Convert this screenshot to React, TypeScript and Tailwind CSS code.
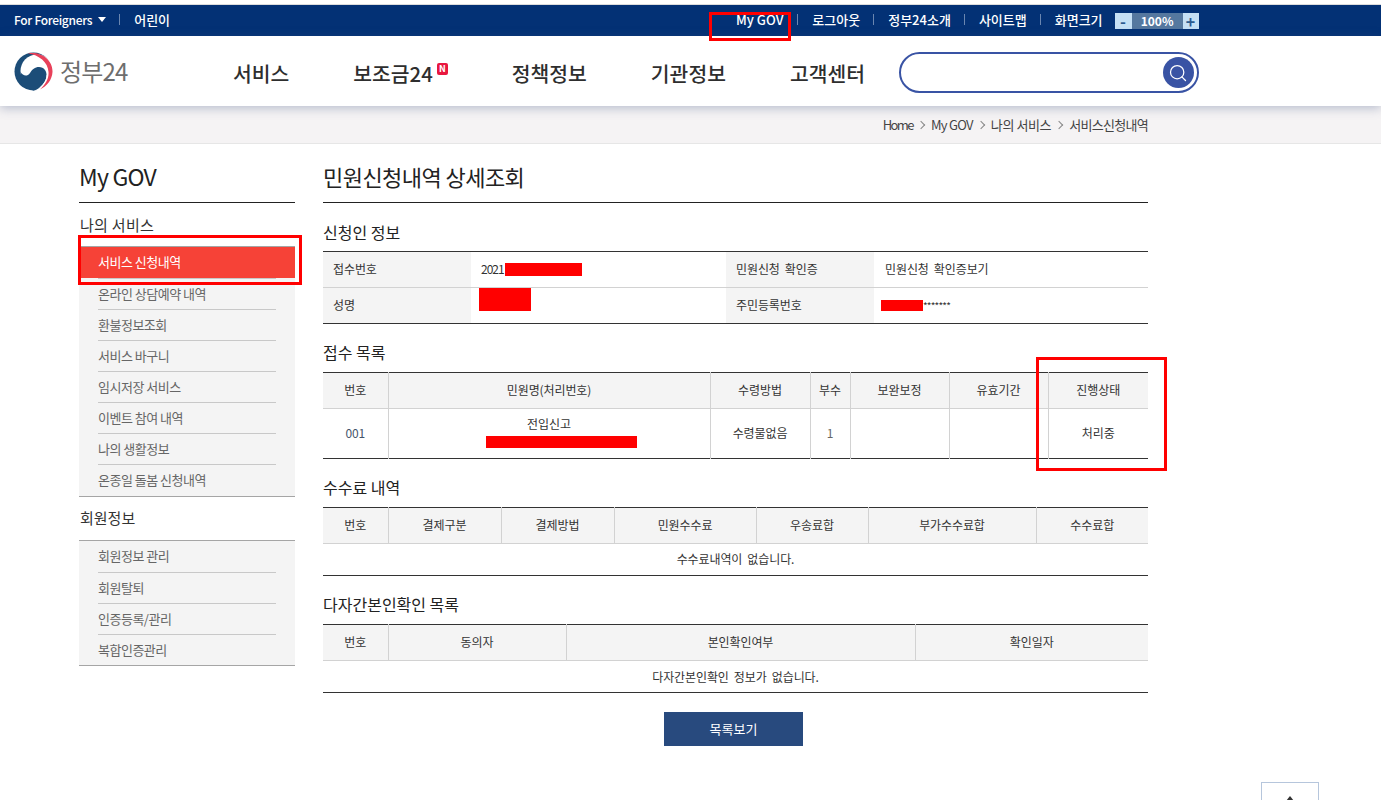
import React from 'react';
import { Search } from 'lucide-react';

const FONT = 'font-["Noto_Sans_CJK_KR","Noto_Sans",sans-serif]';

const TOP_LINKS = ['My GOV', '로그아웃', '정부24소개', '사이트맵'];
const MAIN_MENU = ['서비스', '보조금24', '정책정보', '기관정보', '고객센터'];
const BREADCRUMB = [
  { label: 'Home', className: 'tracking-[-1.6px]' },
  { label: 'My GOV', className: '' },
  { label: '나의 서비스', className: 'tracking-[-0.4px]' },
  { label: '서비스신청내역', className: '' },
];
const SERVICE_MENU = ['온라인 상담예약 내역', '환불정보조회', '서비스 바구니', '임시저장 서비스', '이벤트 참여 내역', '나의 생활정보', '온종일 돌봄 신청내역'];
const MEMBER_MENU = ['회원정보 관리', '회원탈퇴', '인증등록/관리', '복합인증관리'];

const Th: React.FC<{ children: React.ReactNode; last?: boolean }> = ({ children, last }) => (
  <th className={`h-[36px] pb-[2px] bg-[#f4f4f4] border-b border-[#d2d2d2] font-normal ${last ? '' : 'border-r'}`}>{children}</th>
);

const Td: React.FC<{ children?: React.ReactNode; last?: boolean }> = ({ children, last }) => (
  <td className={`pb-[2px] text-center ${last ? '' : 'border-r border-[#d2d2d2]'}`}>{children}</td>
);

const SectionTitle: React.FC<{ children: React.ReactNode }> = ({ children }) => (
  <h3 className="text-[16px] leading-[24px] tracking-normal [word-spacing:0] text-[#222] font-normal">{children}</h3>
);

const App: React.FC = () => {
  return (
    <div className={`relative h-[800px] overflow-hidden bg-white text-[12px] text-[#333] tracking-[-0.1px] ${FONT}`}>
      {/* Top strip */}
      <div className="h-[5px] bg-white border-b border-[#ddd]" />
      <div className="h-[31px] bg-[#033175] flex items-center pl-[14px] pb-[2px] text-white text-[13px] tracking-normal font-medium">
        <span className="text-[12px] tracking-[-0.3px] flex items-center">
          For Foreigners
          <span className="ml-[6px] w-0 h-0 border-x-[4px] border-x-transparent border-t-[5px] border-t-white" />
        </span>
        <span className="ml-[13px] w-px h-[11px] bg-[#6a86b0]" />
        <span className="ml-[14px]">어린이</span>
        <div className="ml-[566px] flex items-center">
          {TOP_LINKS.map(link => (
            <React.Fragment key={link}>
              <span className={link === 'My GOV' ? 'mr-[1px]' : ''}>{link}</span>
              <span className="ml-[13px] mr-[14px] w-px h-[11px] bg-[#6a86b0]" />
            </React.Fragment>
          ))}
          <span>화면크기</span>
          <div className="ml-[12px] mt-[3px] flex items-center h-[16px] font-bold">
            <span className="w-[17px] h-full bg-[#c5e0f5] text-[#2b5a8f] flex items-center justify-center text-[16px]">-</span>
            <span className="w-[51px] h-full bg-[#55789f] flex items-center justify-center text-[12px]">100%</span>
            <span className="w-[16px] h-full bg-[#c5e0f5] text-[#2b5a8f] flex items-center justify-center text-[16px]">+</span>
          </div>
        </div>
      </div>

      {/* Main header */}
      <header className="relative z-10 h-[70px] bg-white flex items-center shadow-[0_2px_10px_rgba(60,80,130,0.35)]">
        <div className="ml-[14px] w-[190px] flex items-center">
          <svg width="39" height="39" viewBox="0 0 39 39" aria-hidden="true">
            <circle cx="19.5" cy="19.5" r="19" fill="#1c4d78" />
            <circle cx="23" cy="19" r="16.5" fill="#fff" />
            <path d="M6.5 20C9 24 13 25 16 21C18 17.5 21 15 25 15C30 15 33 19 32.5 24C32 30 27 36 19.5 38.5L8 34Z" fill="#1c4d78" />
            <path d="M32.6 23C32.5 30 27 36 20.5 38.6L40 40L40 23Z" fill="#fff" />
            <path d="M14 1.5C27 -1 39 8 38.5 20C38 28 33 34 26 37.5C32 32 35 26 34.5 20C34 10 25 3 14 1.5Z" fill="#e8415a" />
          </svg>
          <span className="ml-[7px] text-[24px] font-normal tracking-[-0.8px] text-[#6e6e6e]">정부24</span>
        </div>
        <nav className="ml-[29px] pt-[4px] flex items-center gap-[64px] text-[20.4px] font-medium text-[#2e2e2e] tracking-normal">
          {MAIN_MENU.map(item => (
            <span key={item} className={`relative ${item === '보조금24' ? 'mr-[15px]' : ''}`}>
              {item}
              {item === '보조금24' && (
                <span className="absolute -right-[15px] top-[5px] w-[11px] h-[12px] rounded-[2px] bg-[#e8173f] text-white text-[9px] leading-[12px] font-bold text-center">N</span>
              )}
            </span>
          ))}
        </nav>
        <div className="ml-[34px] mt-[3px] w-[300px] h-[41px] rounded-full border-2 border-[#3953a4] bg-white flex items-center justify-end pr-[3px]">
          <span className="w-[31px] h-[31px] rounded-full bg-[#3953a4] flex items-center justify-center">
            <Search className="w-[20px] h-[20px] text-white" strokeWidth={1.5} />
          </span>
        </div>
      </header>

      {/* Breadcrumb */}
      <div className="h-[38px] bg-[#f5f3f4] border-b border-[#e6e6e6] pr-[233px] flex items-center justify-end text-[13px] tracking-[-0.7px] text-[#444]">
        {BREADCRUMB.map((item, i) => (
          <React.Fragment key={item.label}>
            {i > 0 && <span className="mx-[6px] w-[6px] h-[6px] border-t border-r border-[#888] rotate-45 -translate-x-[1px]" />}
            <span className={item.className}>{item.label}</span>
          </React.Fragment>
        ))}
      </div>

      <div className="flex pl-[79px] pt-[15px]">
        {/* Sidebar */}
        <aside className="w-[216px] text-[13px] tracking-[-0.5px]">
          <h2 className="h-[44px] border-b border-[#222] text-[23px] leading-[34px] tracking-[-0.8px] text-[#222]">My GOV</h2>
          <h3 className="mt-[9px] h-[34px] text-[15px] leading-[26px] tracking-[0.3px] text-[#333] pl-px">나의 서비스</h3>
          <ul className="border-y border-[#a5a5a5] bg-[#f4f4f4] pb-px">
            <li className="h-[31px] bg-[#f64237] text-white pl-[19px] leading-[30px]">서비스 신청내역</li>
            {SERVICE_MENU.map(item => (
              <li key={item} className="mx-[19px] w-[178px] h-[31px] leading-[30px] text-[#666] border-t border-[#c8c8c8]">
                {item}
              </li>
            ))}
          </ul>
          <h3 className="h-[43px] text-[15px] leading-[42px] tracking-normal text-[#333] pl-px">회원정보</h3>
          <ul className="border-y border-[#a5a5a5] bg-[#f4f4f4]">
            {MEMBER_MENU.map(item => (
              <li key={item} className="mx-[19px] w-[178px] h-[31px] leading-[30px] text-[#666] border-t border-[#c8c8c8] first:border-t-0">
                {item}
              </li>
            ))}
          </ul>
        </aside>

        {/* Content */}
        <main className="ml-[28px] w-[825px] [word-spacing:2.5px]">
          <h2 className="h-[44px] border-b border-[#222] text-[22px] leading-[34px] tracking-[-0.55px] [word-spacing:0] text-[#222] font-normal">민원신청내역 상세조회</h2>

          <div className="mt-[17px]"><SectionTitle>신청인 정보</SectionTitle></div>
          <table className="mt-[7px] w-full table-fixed border-collapse border-y border-[#333]">
            <colgroup>
              <col className="w-[148px]" /><col className="w-[255px]" /><col className="w-[148px]" /><col className="w-[274px]" />
            </colgroup>
            <tbody>
              <tr className="h-[36px] border-b border-[#d2d2d2]">
                <td className="pb-[2px] bg-[#f4f4f4] pl-[10px]">접수번호</td>
                <td className="pb-[2px] pl-[10px]">
                  <span className="flex items-center tracking-[-1px]">2021<span className="ml-[1px] mt-[2px] w-[77px] h-[13px] bg-[#ff0000]" /></span>
                </td>
                <td className="pb-[2px] bg-[#f4f4f4] pl-[10px]">민원신청 확인증</td>
                <td className="pb-[2px] pl-[11px]">민원신청 확인증보기</td>
              </tr>
              <tr className="h-[36px]">
                <td className="pb-[2px] bg-[#f4f4f4] pl-[10px]">성명</td>
                <td className="pl-[8px]"><span className="block w-[52px] h-[23px] -mt-[12px] bg-[#ff0000]" /></td>
                <td className="pb-[2px] bg-[#f4f4f4] pl-[10px]">주민등록번호</td>
                <td className="pl-[7px]">
                  <span className="flex items-center text-[10px] tracking-[-0.8px]"><span className="w-[42px] h-[11px] bg-[#ff0000]" />*******</span>
                </td>
              </tr>
            </tbody>
          </table>

          <div className="mt-[16px]"><SectionTitle>접수 목록</SectionTitle></div>
          <table className="mt-[8px] w-full table-fixed border-collapse border-y border-[#333]">
            <colgroup>
              <col className="w-[65px]" /><col className="w-[322px]" /><col className="w-[100px]" /><col className="w-[40px]" /><col className="w-[99px]" /><col className="w-[99px]" /><col className="w-[100px]" />
            </colgroup>
            <thead>
              <tr><Th>번호</Th><Th>민원명(처리번호)</Th><Th>수령방법</Th><Th>부수</Th><Th>보완보정</Th><Th>유효기간</Th><Th last>진행상태</Th></tr>
            </thead>
            <tbody>
              <tr className="h-[50px]">
                <Td><span className="text-[#44546a]">001</span></Td>
                <td className="text-center border-r border-[#d2d2d2]">
                  <div className="leading-[18px] -mt-[5px]">전입신고</div>
                  <div className="ml-[97px] mt-[3px] w-[151px] h-[12px] bg-[#ff0000]" />
                </td>
                <Td>수령물없음</Td>
                <Td><span className="text-[#666]">1</span></Td>
                <Td />
                <Td />
                <Td last>처리중</Td>
              </tr>
            </tbody>
          </table>

          <div className="mt-[16px]"><SectionTitle>수수료 내역</SectionTitle></div>
          <table className="mt-[8px] w-full table-fixed border-collapse border-y border-[#333]">
            <colgroup>
              <col className="w-[65px]" /><col className="w-[113px]" /><col className="w-[113px]" /><col className="w-[142px]" /><col className="w-[112px]" /><col className="w-[168px]" /><col className="w-[112px]" />
            </colgroup>
            <thead>
              <tr><Th>번호</Th><Th>결제구분</Th><Th>결제방법</Th><Th>민원수수료</Th><Th>우송료합</Th><Th>부가수수료합</Th><Th last>수수료합</Th></tr>
            </thead>
            <tbody>
              <tr className="h-[32px]"><td colSpan={7} className="pb-[2px] text-center">수수료내역이 없습니다.</td></tr>
            </tbody>
          </table>

          <div className="mt-[16px]"><SectionTitle>다자간본인확인 목록</SectionTitle></div>
          <table className="mt-[8px] w-full table-fixed border-collapse border-y border-[#333]">
            <colgroup>
              <col className="w-[65px]" /><col className="w-[178px]" /><col className="w-[349px]" /><col className="w-[233px]" />
            </colgroup>
            <thead>
              <tr><Th>번호</Th><Th>동의자</Th><Th>본인확인여부</Th><Th last>확인일자</Th></tr>
            </thead>
            <tbody>
              <tr className="h-[32px]"><td colSpan={4} className="text-center">다자간본인확인 정보가 없습니다.</td></tr>
            </tbody>
          </table>

          <div className="mt-[19px] flex justify-center pr-[4px]">
            <button className="w-[139px] h-[34px] bg-[#284a7e] text-white text-[13px] tracking-normal">목록보기</button>
          </div>
        </main>
      </div>

      {/* Scroll-to-top button, cut off by the viewport */}
      <div className="absolute left-[1261px] top-[782px] w-[58px] h-[40px] bg-white border border-[#b6c6dc] flex justify-center pt-[13px]">
        <span className="w-0 h-0 border-x-[4px] border-x-transparent border-b-[5px] border-b-[#333]" />
      </div>

      {/* Red annotation boxes */}
      <div className="absolute z-20 left-[709px] top-[12px] w-[82px] h-[29px] border-[3px] border-[#ff0000]" />
      <div className="absolute z-20 left-[78px] top-[235px] w-[224px] h-[50px] border-[3px] border-[#ff0000]" />
      <div className="absolute z-20 left-[1036px] top-[357px] w-[131px] h-[114px] border-[3px] border-[#ff0000]" />
    </div>
  );
};

export default App;
